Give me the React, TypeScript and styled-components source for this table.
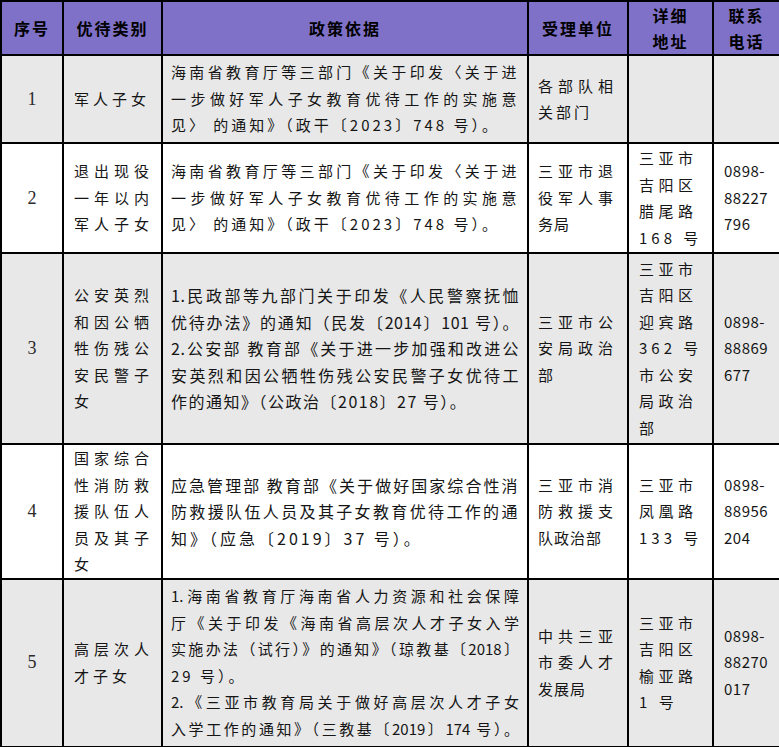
import React from "react";
import styled, { createGlobalStyle } from "styled-components";

const Global = createGlobalStyle`
  html, body { margin: 0; padding: 0; background: #ffffff; }
  body { font-family: "Noto Sans CJK SC", "Noto Sans", sans-serif; color: #111; }
`;

const Table = styled.table`
  border-collapse: collapse;
  table-layout: fixed;
  width: 779px;
`;

const HeaderRow = styled.tr`
  background: #7f71c8;
  height: 53px;
`;

const BodyRow = styled.tr<{ $gray: boolean; $h: number }>`
  background: ${(p) => (p.$gray ? "#e8e8e8" : "#ffffff")};
  height: ${(p) => p.$h}px;
`;

const HeadCell = styled.th`
  border: 2px solid #000;
  padding: 0;
  font-weight: 700;
  font-size: 16px;
  line-height: 26px;
  letter-spacing: 2px;
  text-align: center;
  vertical-align: middle;
  color: #000;
`;

const SeqCell = styled.td`
  border: 2px solid #000;
  padding: 0;
  text-align: center;
  vertical-align: middle;
  font-family: "Liberation Serif", "Times New Roman", serif;
  font-size: 18px;
  color: #2a2a2a;
`;

const TextCell = styled.td<{ $pl: number; $pr: number; $ls: number; $fs?: number }>`
  border: 2px solid #000;
  padding: 0 ${(p) => p.$pr}px 0 ${(p) => p.$pl}px;
  vertical-align: middle;
  font-size: ${(p) => p.$fs ?? 15}px;
  line-height: 26.5px;
  letter-spacing: ${(p) => p.$ls}px;
  color: #151515;
  overflow: hidden;
`;

const Line = styled.span<{ $justify: boolean; $ls?: number }>`
  display: block;
  white-space: nowrap;
  text-align: ${(p) => (p.$justify ? "justify" : "left")};
  text-align-last: ${(p) => (p.$justify ? "justify" : "left")};
  text-justify: inter-character;
  ${(p) => (p.$ls !== undefined ? `letter-spacing: ${p.$ls}px;` : "")}
`;

type Lines = { t: string; j?: boolean; ls?: number }[];

const L = (arr: string[], lastJustify = false, lastLs?: number): Lines =>
  arr.map((t, i) => ({
    t,
    j: i < arr.length - 1 || lastJustify,
    ls: i === arr.length - 1 ? lastLs : undefined,
  }));

type RowData = {
  n: number;
  gray: boolean;
  h: number;
  cat: Lines;
  policy: Lines;
  policyFs?: number;
  policyLs?: number;
  unit: Lines;
  addr: Lines;
  phone: string[];
};

const policy1 = L(
  [
    "海南省教育厅等三部门《关于印发〈关于进",
    "一步做好军人子女教育优待工作的实施意",
    "见〉 的通知》（政干〔2023〕748 号）。",
  ],
  false,
  3
);

const rows: RowData[] = [
  {
    n: 1,
    gray: true,
    h: 88,
    cat: [{ t: "军人子女" }],
    policy: policy1,
    unit: L(["各部队相", "关部门"]),
    addr: [],
    phone: [],
  },
  {
    n: 2,
    gray: false,
    h: 110,
    cat: L(["退出现役", "一年以内", "军人子女"], true),
    policy: policy1,
    unit: L(["三亚市退", "役军人事", "务局"], false, 1),
    addr: L(["三亚市", "吉阳区", "腊尾路", "168 号"]),
    phone: ["0898-", "88227", "796"],
  },
  {
    n: 3,
    gray: true,
    h: 191,
    cat: L(["公安英烈", "和因公牺", "牲伤残公", "安民警子", "女"]),
    policy: [
      { t: "1.民政部等九部门关于印发《人民警察抚恤", j: true },
      { t: "优待办法》的通知（民发〔2014〕101 号）。", j: true },
      { t: "2.公安部 教育部《关于进一步加强和改进公", j: true },
      { t: "安英烈和因公牺牲伤残公安民警子女优待工", j: true },
      { t: "作的通知》（公政治〔2018〕27 号）。", j: false, ls: 1.5 },
    ],
    policyFs: 16,
    policyLs: 0.5,
    unit: L(["三亚市公", "安局政治", "部"]),
    addr: L(["三亚市", "吉阳区", "迎宾路", "362 号", "市公安", "局政治", "部"]),
    phone: ["0898-", "88869", "677"],
  },
  {
    n: 4,
    gray: false,
    h: 134,
    cat: L(["国家综合", "性消防救", "援队伍人", "员及其子", "女"]),
    policy: L([
      "应急管理部 教育部《关于做好国家综合性消",
      "防救援队伍人员及其子女教育优待工作的通",
      "知》（应急〔2019〕37 号）。",
    ], false, 3),
    policyFs: 16,
    policyLs: 1.5,
    unit: L(["三亚市消", "防救援支", "队政治部"], false, 1),
    addr: L(["三亚市", "凤凰路", "133 号"]),
    phone: ["0898-", "88956", "204"],
  },
  {
    n: 5,
    gray: true,
    h: 168,
    cat: L(["高层次人", "才子女"]),
    policy: [
      { t: "1.海南省教育厅海南省人力资源和社会保障", j: true },
      { t: "厅《关于印发《海南省高层次人才子女入学", j: true },
      { t: "实施办法（试行）》的通知》（琼教基〔2018〕", j: true },
      { t: "29 号）。", j: false, ls: 3 },
      { t: "2.《三亚市教育局关于做好高层次人才子女", j: true },
      { t: "入学工作的通知》（三教基〔2019〕174 号）。", j: true },
    ],
    policyLs: 0,
    unit: L(["中共三亚", "市委人才", "发展局"], false, 1),
    addr: L(["三亚市", "吉阳区", "榆亚路", "1 号"]),
    phone: ["0898-", "88270", "017"],
  },
];

const renderLines = (lines: Lines) =>
  lines.map((l, i) => (
    <Line key={i} $justify={!!l.j} $ls={l.ls}>
      {l.t}
    </Line>
  ));

export default function App() {
  return (
    <>
      <Global />
      <Table>
        <colgroup>
          <col style={{ width: 62 }} />
          <col style={{ width: 99 }} />
          <col style={{ width: 366 }} />
          <col style={{ width: 100 }} />
          <col style={{ width: 85 }} />
          <col style={{ width: 67 }} />
        </colgroup>
        <thead>
          <HeaderRow>
            <HeadCell>序号</HeadCell>
            <HeadCell>优待类别</HeadCell>
            <HeadCell>政策依据</HeadCell>
            <HeadCell>受理单位</HeadCell>
            <HeadCell>
              详细
              <br />
              地址
            </HeadCell>
            <HeadCell>
              联系
              <br />
              电话
            </HeadCell>
          </HeaderRow>
        </thead>
        <tbody>
          {rows.map((r) => (
            <BodyRow key={r.n} $gray={r.gray} $h={r.h}>
              <SeqCell>{r.n}</SeqCell>
              <TextCell $pl={10} $pr={8} $ls={4}>
                {renderLines(r.cat)}
              </TextCell>
              <TextCell $pl={8} $pr={8} $ls={r.policyLs ?? 2.5} $fs={r.policyFs}>
                {renderLines(r.policy)}
              </TextCell>
              <TextCell $pl={9} $pr={11} $ls={3}>
                {renderLines(r.unit)}
              </TextCell>
              <TextCell $pl={10} $pr={15} $ls={4}>
                {renderLines(r.addr)}
              </TextCell>
              <TextCell $pl={10} $pr={2} $ls={0.5}>
                {r.phone.map((p, i) => (
                  <Line key={i} $justify={false}>
                    {p}
                  </Line>
                ))}
              </TextCell>
            </BodyRow>
          ))}
        </tbody>
      </Table>
    </>
  );
}
